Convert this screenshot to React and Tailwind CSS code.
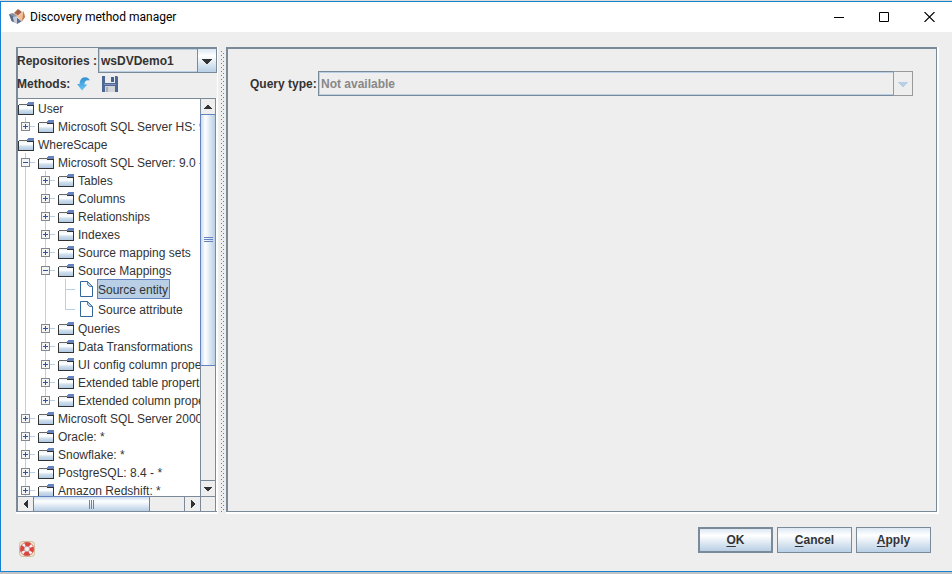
import React from "react";

const ROWS = [
  { label: "User", level: 0, kind: "root" },
  { label: "Microsoft SQL Server HS: 9.0", level: 1, sign: "+", last: true },
  { label: "WhereScape", level: 0, kind: "root" },
  { label: "Microsoft SQL Server: 9.0 - *", level: 1, sign: "-" },
  { label: "Tables", level: 2, sign: "+" },
  { label: "Columns", level: 2, sign: "+" },
  { label: "Relationships", level: 2, sign: "+" },
  { label: "Indexes", level: 2, sign: "+" },
  { label: "Source mapping sets", level: 2, sign: "+" },
  { label: "Source Mappings", level: 2, sign: "-" },
  { label: "Source entity", level: 3, kind: "file", selected: true },
  { label: "Source attribute", level: 3, kind: "file", last: true },
  { label: "Queries", level: 2, sign: "+" },
  { label: "Data Transformations", level: 2, sign: "+" },
  { label: "UI config column properties", level: 2, sign: "+" },
  { label: "Extended table properties", level: 2, sign: "+" },
  { label: "Extended column properties", level: 2, sign: "+", last: true },
  { label: "Microsoft SQL Server 2000", level: 1, sign: "+" },
  { label: "Oracle: *", level: 1, sign: "+" },
  { label: "Snowflake: *", level: 1, sign: "+" },
  { label: "PostgreSQL: 8.4 - *", level: 1, sign: "+" },
  { label: "Amazon Redshift: *", level: 1, sign: "+" },
];

function FolderIcon() {
  return (
    <svg width="16" height="16" viewBox="0 0 16 16" shapeRendering="crispEdges" className="block shrink-0" aria-hidden="true">
      <defs>
        <linearGradient id="folder" x1="0" y1="0" x2="0" y2="1">
          <stop offset="0" stopColor="#eef4fa" />
          <stop offset="0.35" stopColor="#ffffff" />
          <stop offset="0.6" stopColor="#cfdfee" />
          <stop offset="1" stopColor="#b0cae3" />
        </linearGradient>
      </defs>
      <rect x="1" y="5" width="14" height="9" fill="url(#folder)" />
      <path d="M0 5h1v10H0zM0 14h16v1H0zM15 5h1v10h-1zM9 5h6v1H9z" fill="#333333" />
      <path d="M1 4h8v1H1z" fill="#666666" />
      <path d="M10 2h6v1h-6zM9 3h7v2H9z" fill="#6382bf" />
    </svg>
  );
}

function FileIcon() {
  return (
    <svg width="16" height="16" viewBox="0 0 16 16" className="block shrink-0" aria-hidden="true">
      <path d="M2.5 0.5h7l5 5v10h-12z" fill="#ffffff" stroke="#336699" />
      <path d="M9.5 0.5v3l2 2h3z" fill="#b8cfe5" stroke="#336699" strokeWidth="0.8" />
    </svg>
  );
}

function Expander({ sign, label }) {
  return (
    <button
      type="button"
      aria-label={(sign === "+" ? "Expand " : "Collapse ") + label}
      className="absolute top-[5px] left-[3px] size-[9px] border border-[#808890] bg-[#f4f4f4]"
    >
      <svg width="7" height="7" viewBox="0 0 7 7" shapeRendering="crispEdges" className="block">
        <path d={sign === "+" ? "M1 3h5v1H1zM3 1h1v5H3z" : "M1 3h5v1H1z"} fill="#34519c" />
      </svg>
    </button>
  );
}

function TreeRow({ row }) {
  const file = row.kind === "file";
  const guides = Array.from({ length: row.level }, (_, i) => i + 1);
  return (
    <li
      role="treeitem"
      aria-level={row.level + 1}
      aria-selected={!!row.selected}
      className={`flex items-center whitespace-nowrap ${file ? "h-5" : "h-[18px]"}`}
    >
      {guides.map((g) => {
        const own = g === row.level;
        return (
          <span key={g} className="relative h-full w-5 shrink-0">
            <span className={`absolute top-0 left-[7px] w-px bg-[#b8cfe5] ${own && row.last ? "h-1/2" : "h-full"}`} />
            {own && <span className="absolute top-1/2 left-[7px] h-px w-[10px] bg-[#b8cfe5]" />}
            {own && row.sign && <Expander sign={row.sign} label={row.label} />}
          </span>
        );
      })}
      {file ? <FileIcon /> : <FolderIcon />}
      <span
        className={`ml-[3px] flex h-full items-center border pt-px pr-px ${
          row.selected ? "border-[#6382bf] bg-[#b8cfe5]" : "border-transparent"
        }`}
      >
        {row.label}
      </span>
    </li>
  );
}

function Triangle({ d, fill = "#333333" }) {
  return (
    <svg width="10" height="10" viewBox="0 0 10 10" shapeRendering="crispEdges" className="block" aria-hidden="true">
      <path d={d} fill={fill} />
    </svg>
  );
}

const UP = "M4 3h2v1h1v1h1v1h1v1H1V6h1V5h1V4h1z";
const DOWN = "M1 3h8v1H8v1H7v1H6v1H4V6H3V5H2V4H1z";
const LEFT = "M3 4h1V3h1V2h1V1h1v8H6V8H5V7H4V6H3z";
const RIGHT = "M7 4H6V3H5V2H4V1H3v8h1V8h1V7h1V6h1z";

function VerticalBar() {
  return (
    <div className="flex w-[15px] shrink-0 flex-col border-l border-[#7a8a99]">
      <button type="button" aria-label="Scroll up" className="flex h-[15px] shrink-0 items-center justify-center bg-[#eeeeee]">
        <Triangle d={UP} />
      </button>
      <div className="-ml-px flex flex-[252_1_0%] items-center justify-center border border-r-0 border-[#6382bf] bg-linear-to-r from-[#c8daec] via-white via-30% to-[#b8cfe5]">
        <span className="flex flex-col gap-px">
          <i className="h-px w-[9px] bg-[#6382bf]" />
          <i className="h-px w-[9px] bg-[#6382bf]" />
          <i className="h-px w-[9px] bg-[#6382bf]" />
        </span>
      </div>
      <div className="flex-[115_1_0%] bg-[#eeeeee]" />
      <button type="button" aria-label="Scroll down" className="flex h-4 shrink-0 items-center justify-center border-t border-[#7a8a99] bg-[#eeeeee]">
        <Triangle d={DOWN} />
      </button>
    </div>
  );
}

function HorizontalBar() {
  return (
    <div className="flex h-[15px] shrink-0 border-t border-[#7a8a99]">
      <button type="button" aria-label="Scroll left" className="flex w-[15px] shrink-0 items-center justify-center bg-[#eeeeee]">
        <Triangle d={LEFT} />
      </button>
      <div className="-mt-px flex flex-[117_1_0%] items-center justify-center gap-px border border-b-0 border-[#6382bf] bg-linear-to-b from-[#c8daec] via-white via-30% to-[#b8cfe5]">
        <i className="h-[9px] w-px bg-[#6382bf]" />
        <i className="h-[9px] w-px bg-[#6382bf]" />
        <i className="h-[9px] w-px bg-[#6382bf]" />
      </div>
      <div className="flex-[34_1_0%] bg-[#eeeeee]" />
      <button type="button" aria-label="Scroll right" className="flex w-4 shrink-0 items-center justify-center border-l border-[#7a8a99] bg-[#eeeeee]">
        <Triangle d={RIGHT} />
      </button>
      <div className="w-[15px] shrink-0 border-l border-[#7a8a99] bg-[#eeeeee]" />
    </div>
  );
}

function AppLogo() {
  return (
    <svg width="16" height="16" viewBox="0 0 16 16" className="block shrink-0" aria-hidden="true">
      <path d="M0 5l4-1 4 3v7.500l-5-2z" fill="#8593a8" />
      <path d="M0 5l4 2.500 1 5.500-2.500-1z" fill="#5a6b8a" />
      <path d="M4 8l4-1v7.500l-3-1z" fill="#c3ccd8" />
      <path d="M9 0l4 3-4 3.500L5 4z" fill="#a5624a" />
      <path d="M5 4l4 2.500V8L6 6z" fill="#e5a276" />
      <path d="M9 6.500L14.500 2 16 8l-3.500 5L9 8.500z" fill="#efc09a" />
      <path d="M14.500 2L16 8l-3 4.500z" fill="#c87848" />
      <path d="M8 8.500l4.500 4L8 15z" fill="#5c6f92" />
    </svg>
  );
}

function TitleBar() {
  return (
    <header className="flex h-[30px] shrink-0 items-center bg-white pl-2 text-black">
      <AppLogo />
      <h1 className="ml-[5px] flex-1 font-[Roboto,'Open_Sans',sans-serif] text-[12px]">Discovery method manager</h1>
      <button type="button" aria-label="Minimize" className="flex h-full w-[45px] items-center justify-center">
        <svg width="10" height="10" viewBox="0 0 10 10" shapeRendering="crispEdges"><path d="M0 5h10v1H0z" /></svg>
      </button>
      <button type="button" aria-label="Maximize" className="flex h-full w-[46px] items-center justify-center">
        <svg width="10" height="10" viewBox="0 0 10 10" fill="none" stroke="#000000"><path d="M0.500 0.500h9v9h-9z" /></svg>
      </button>
      <button type="button" aria-label="Close" className="flex h-full w-[45px] items-center justify-center">
        <svg width="11" height="10" viewBox="0 0 11 10" stroke="#000000" strokeWidth="1.100"><path d="M0.500 0l10 10M10.500 0l-10 10" /></svg>
      </button>
    </header>
  );
}

function UndoIcon() {
  return (
    <svg width="14" height="16" viewBox="0 0 14 16" aria-hidden="true">
      <defs>
        <linearGradient id="undo" x1="0" y1="0" x2="0" y2="1">
          <stop offset="0" stopColor="#2f8fd0" />
          <stop offset="1" stopColor="#6cc4f5" />
        </linearGradient>
      </defs>
      <path d="M13 4.500C11.500 0.500 6 0 3.800 3.500 2.800 5 2.600 6.500 2.600 8H0l5 6.500L10.300 8.500H7.500C7.300 5.500 9 3.600 13 4.500z" fill="url(#undo)" />
    </svg>
  );
}

function SaveIcon() {
  return (
    <svg width="16" height="16" viewBox="0 0 16 16" aria-hidden="true">
      <path d="M0 0h15l1 1v15H0z" fill="#4d6794" />
      <path d="M3 0h10v7H3z" fill="#e9ebee" />
      <path d="M9 1h3v5H9z" fill="#47618f" />
      <path d="M3 10h10v6H3z" fill="#d2d4da" />
      <path d="M4 11h2v5H4z" fill="#a9adb8" />
      <path d="M2 8h12v1H2z" fill="#7e94ba" />
    </svg>
  );
}

function HelpIcon() {
  return (
    <svg width="16" height="16" viewBox="0 0 16 16" aria-hidden="true">
      <rect x="0.500" y="0.500" width="15" height="15" rx="3" fill="#f0e6d2" stroke="#d3bf98" />
      <circle cx="8" cy="8" r="4.800" fill="none" stroke="#dd4440" strokeWidth="4" />
      <circle cx="8" cy="8" r="4.800" fill="none" stroke="#f6f2f2" strokeWidth="4" strokeDasharray="2.200 5.340" strokeDashoffset="-2.670" />
      <circle cx="8" cy="8" r="6.800" fill="none" stroke="#b8403c" strokeWidth="0.500" />
      <circle cx="8" cy="8" r="2.800" fill="#eeeeee" stroke="#a8504c" strokeWidth="0.500" />
    </svg>
  );
}

function DialogButton({ letter, rest, primary }) {
  return (
    <button
      type="button"
      className={`h-[26px] w-[75px] border-[#7a8a99] bg-linear-to-b from-[#dde8f3] via-white via-30% to-[#b8cfe5] font-bold ${
        primary ? "border-2" : "border"
      }`}
    >
      <span className="underline underline-offset-2">{letter}</span>
      {rest}
    </button>
  );
}

export default function App() {
  return (
    <div className="flex h-screen flex-col border-t border-[#dcdcdc] bg-[#c3c3c3] pb-[2px] font-['Liberation_Sans',Arial,sans-serif] text-[12px] leading-4 text-[#333333]">
      <div className="flex min-h-0 flex-1 flex-col border-y border-l border-[#1a80d0] bg-[#eeeeee]">
        <TitleBar />
        <main className="flex min-h-0 flex-1 pt-[15px] pr-[13px] pl-[15px]">
          <section className="flex w-[202px] shrink-0 flex-col border-r border-b-2 border-white">
            <div className="flex min-h-0 flex-1 flex-col border-t border-b border-l-2 border-[#7a8a99]">
              <div className="flex h-[25px] items-center">
                <label htmlFor="repository" className="-ml-px w-[81px] font-bold whitespace-nowrap">Repositories :</label>
                <div className="relative h-full flex-1">
                  <select id="repository" className="h-full w-full appearance-none border border-[#7a8a99] bg-[#eeeeee] pl-[2px] font-bold shadow-[inset_0_0_0_1px_#b8cfe5]">
                    <option>wsDVDemo1</option>
                  </select>
                  <span className="pointer-events-none absolute inset-y-0 right-0 flex w-5 items-center justify-center border border-[#7a8a99] bg-linear-to-b from-[#dde8f3] via-white via-30% to-[#b8cfe5]">
                    <Triangle d="M0 3h10v1H9v1H8v1H7v1H6v1H4V7H3V6H2V5H1V4H0z" />
                  </span>
                </div>
              </div>
              <div className="flex h-[25px] items-center pb-[3px]">
                <span className="-ml-px w-[60px] font-bold">Methods:</span>
                <button type="button" aria-label="Undo" className="flex w-[25px] items-center"><UndoIcon /></button>
                <button type="button" aria-label="Save" className="flex items-center"><SaveIcon /></button>
              </div>
              <div className="mr-px flex min-h-0 flex-1 flex-col border-t border-r border-[#7a8a99] shadow-[1px_0_0_#ffffff]">
                <div className="flex min-h-0 flex-1">
                  <ul role="tree" aria-label="Methods" className="min-w-0 flex-1 overflow-hidden bg-white">
                    {ROWS.map((row) => <TreeRow key={row.label} row={row} />)}
                  </ul>
                  <VerticalBar />
                </div>
                <HorizontalBar />
              </div>
            </div>
          </section>
          <div
            role="separator"
            aria-orientation="vertical"
            className="mt-1 mb-[2px] w-2 shrink-0 bg-[conic-gradient(at_1px_1px,transparent_75%,#7a7a7a_0),conic-gradient(at_1px_1px,transparent_75%,#7a7a7a_0)] bg-size-[4px_4px] bg-position-[0_0,2px_2px] bg-clip-content bg-origin-content pr-[2px] pl-[3px]"
          />
          <section className="flex min-w-0 flex-1 border-r-2 border-b-2 border-white">
            <div className="flex-1 border-t-2 border-r border-b border-l-2 border-[#7a8a99] pt-[22px] pr-[23px] pl-[22px]">
              <div className="flex h-[25px] items-center">
                <label htmlFor="query" className="w-[68px] shrink-0 font-bold whitespace-nowrap">Query type:</label>
                <div className="relative h-full min-w-0 flex-1">
                  <select id="query" disabled className="h-full w-full appearance-none border border-[#7a8a99] bg-[#eeeeee] pl-[2px] font-bold text-[#888888] opacity-100 shadow-[inset_0_0_0_1px_#b8cfe5]">
                    <option>Not available</option>
                  </select>
                  <span className="pointer-events-none absolute inset-y-0 right-0 flex w-5 items-center justify-center border border-[#999999] bg-[#eeeeee]">
                    <Triangle d="M0 3h10v1H9v1H8v1H7v1H6v1H4V7H3V6H2V5H1V4H0z" fill="#b8cfe5" />
                  </span>
                </div>
              </div>
            </div>
          </section>
        </main>
        <footer className="flex h-[57px] shrink-0 items-center justify-between pr-[21px] pl-[18px]">
          <button type="button" aria-label="Help" className="mt-[13px]"><HelpIcon /></button>
          <div className="mb-[5px] flex gap-1">
            <DialogButton letter="O" rest="K" primary />
            <DialogButton letter="C" rest="ancel" />
            <DialogButton letter="A" rest="pply" />
          </div>
        </footer>
      </div>
    </div>
  );
}
